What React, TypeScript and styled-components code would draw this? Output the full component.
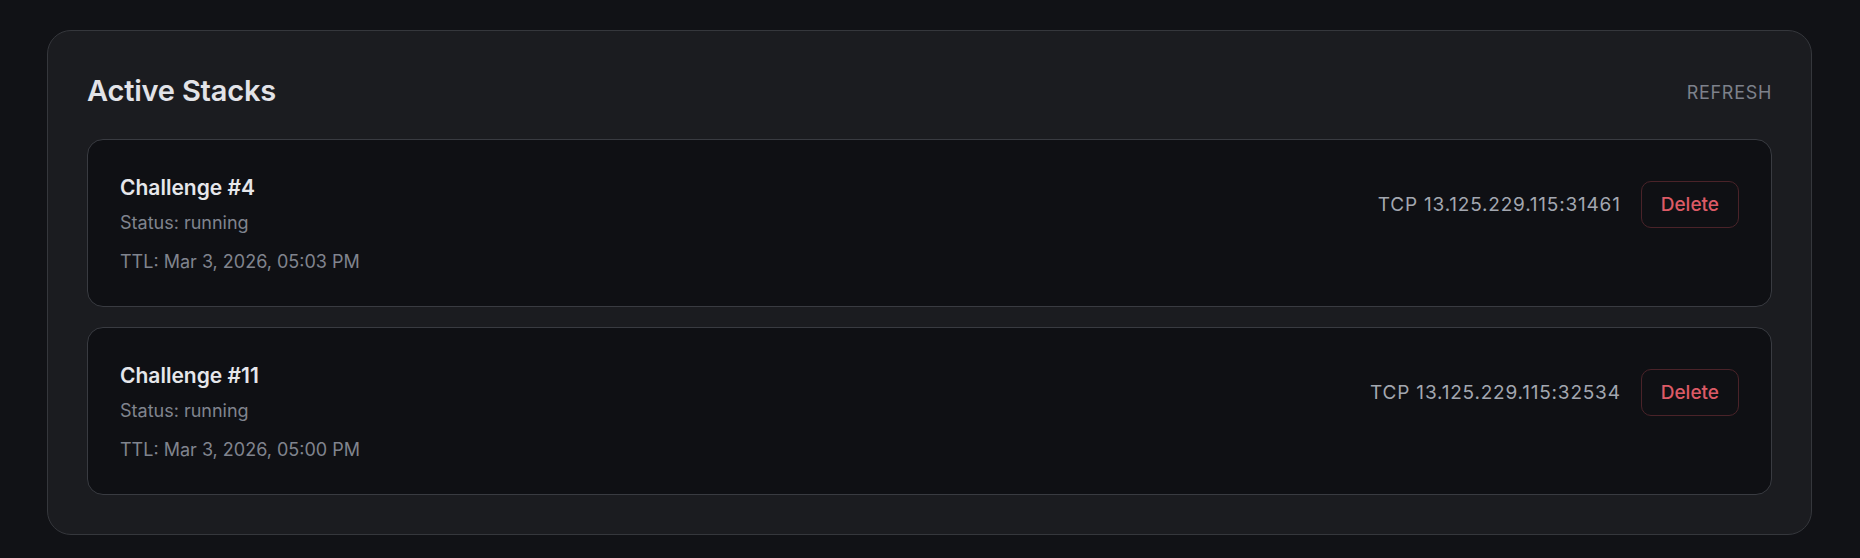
import styled, { createGlobalStyle } from "styled-components";

interface Stack {
  id: number;
  status: string;
  ttl: string;
  endpoint: string;
}

const stacks: Stack[] = [
  { id: 4, status: "running", ttl: "Mar 3, 2026, 05:03 PM", endpoint: "TCP 13.125.229.115:31461" },
  { id: 11, status: "running", ttl: "Mar 3, 2026, 05:00 PM", endpoint: "TCP 13.125.229.115:32534" },
];

const GlobalStyle = createGlobalStyle`
  html, body {
    margin: 0;
    padding: 0;
    background: #111216;
  }
  * {
    box-sizing: border-box;
  }
`;

const App = () => {
  return (
    <>
      <GlobalStyle />
      <StyledPage>
        <StyledPanel>
          <StyledHeader>
            <StyledTitle>Active Stacks</StyledTitle>
            <StyledRefresh type="button">REFRESH</StyledRefresh>
          </StyledHeader>
          <StyledList>
            {stacks.map((stack) => (
              <StyledCard key={stack.id}>
                <StyledInfo>
                  <StyledName>Challenge #{stack.id}</StyledName>
                  <StyledMeta $gap={5}>Status: {stack.status}</StyledMeta>
                  <StyledMeta $gap={11}>TTL: {stack.ttl}</StyledMeta>
                </StyledInfo>
                <StyledActions>
                  <StyledEndpoint>{stack.endpoint}</StyledEndpoint>
                  <StyledDelete type="button">Delete</StyledDelete>
                </StyledActions>
              </StyledCard>
            ))}
          </StyledList>
        </StyledPanel>
      </StyledPage>
    </>
  );
};

export default App;

const StyledPage = styled.div`
  width: 1860px;
  height: 558px;
  padding: 30px 48px 24px 47px;
  background: #111216;
  font-family: Inter, "Noto Sans", sans-serif;
`;

const StyledPanel = styled.section`
  height: 505px;
  padding: 41px 39px 40px;
  background: #1b1c20;
  border: 1px solid #35373c;
  border-radius: 24px;
`;

const StyledHeader = styled.header`
  display: flex;
  justify-content: space-between;
  align-items: center;
  height: 38px;
  margin-bottom: 29px;
`;

const StyledTitle = styled.h2`
  margin: 0;
  font-family: Inter, "Noto Sans", sans-serif;
  font-size: 29px;
  font-weight: 600;
  line-height: 38px;
  letter-spacing: -0.2px;
  color: #e2e3e8;
`;

const StyledRefresh = styled.button`
  margin-top: 3px;
  padding: 0;
  border: none;
  background: transparent;
  font-family: Inter, "Noto Sans", sans-serif;
  font-size: 18px;
  font-weight: 400;
  letter-spacing: 0.7px;
  color: #7d818b;
  cursor: pointer;
`;

const StyledList = styled.div`
  display: flex;
  flex-direction: column;
  gap: 20px;
`;

const StyledCard = styled.article`
  display: flex;
  justify-content: space-between;
  align-items: flex-start;
  height: 168px;
  padding: 32px 32px 30px;
  background: #0f1014;
  border: 1px solid #393b41;
  border-radius: 16px;
`;

const StyledInfo = styled.div`
  display: flex;
  flex-direction: column;
`;

const StyledName = styled.div`
  font-size: 21px;
  font-weight: 600;
  line-height: 32px;
  color: #e6e7eb;
`;

const StyledMeta = styled.div<{ $gap: number }>`
  margin-top: ${({ $gap }) => $gap}px;
  font-size: 18px;
  line-height: 28px;
  color: #80848e;
`;

const StyledActions = styled.div`
  display: flex;
  align-items: center;
  gap: 20px;
  margin-top: 9px;
`;

const StyledEndpoint = styled.span`
  font-size: 19px;
  letter-spacing: 0.8px;
  color: #a3a7b0;
`;

const StyledDelete = styled.button`
  height: 47px;
  padding: 0 19px;
  background: transparent;
  border: 1px solid #4a2329;
  border-radius: 10px;
  font-family: Inter, "Noto Sans", sans-serif;
  font-size: 19px;
  font-weight: 500;
  color: #dc5a66;
  cursor: pointer;
`;
